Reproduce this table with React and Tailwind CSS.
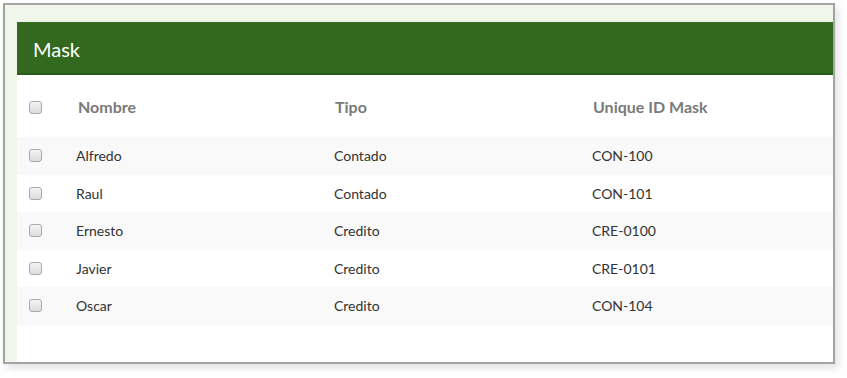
import React from 'react';

const rows = [
  { nombre: 'Alfredo', tipo: 'Contado', mask: 'CON-100' },
  { nombre: 'Raul', tipo: 'Contado', mask: 'CON-101' },
  { nombre: 'Ernesto', tipo: 'Credito', mask: 'CRE-0100' },
  { nombre: 'Javier', tipo: 'Credito', mask: 'CRE-0101' },
  { nombre: 'Oscar', tipo: 'Credito', mask: 'CON-104' },
];

function Check() {
  return (
    <span className="block w-[13px] h-[13px] rounded-[3px] border border-[#a9a9a9] bg-gradient-to-b from-[#f4f4f4] to-[#dcdcdc]" />
  );
}

export default function App() {
  return (
    <div className="w-[847px] h-[378px] bg-white font-['Lato',sans-serif] pt-[3px] pl-[3px]">
      <div className="w-[832px] h-[361px] border-2 border-[#a3a3a3] bg-[#f1f6eb] pt-[17px] pl-[12px] shadow-[3px_4px_8px_rgba(0,0,0,0.12)] flex flex-col">
        <div className="flex-1 bg-white flex flex-col">
          {/* Panel heading */}
          <div className="h-[53px] bg-[#33691e] border-b-2 border-[#2a5a18] flex items-center pl-[16px] pt-[3px]">
            <h2 className="text-[20px] text-white">Mask</h2>
          </div>

          {/* Column headers */}
          <div className="h-[62px] grid grid-cols-[59px_258px_258px_1fr] items-center text-[16px] font-bold text-[#7a7a7a] pt-[2px]">
            <div className="pl-[12px]"><Check /></div>
            <div className="pl-[2px]">Nombre</div>
            <div className="pl-[1px]">Tipo</div>
            <div className="pl-[1px]">Unique ID Mask</div>
          </div>

          {/* Rows */}
          {rows.map((r, i) => (
            <div
              key={r.nombre}
              className={`h-[37.5px] grid grid-cols-[59px_258px_258px_1fr] items-center text-[14px] text-[#333] ${i % 2 === 0 ? 'bg-[#f9f9f9]' : 'bg-white'}`}
            >
              <div className="pl-[12px]"><Check /></div>
              <div>{r.nombre}</div>
              <div>{r.tipo}</div>
              <div>{r.mask}</div>
            </div>
          ))}
        </div>
      </div>
    </div>
  );
}
